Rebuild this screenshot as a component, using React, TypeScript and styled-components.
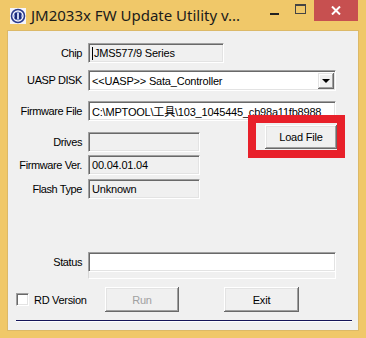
import React from "react";
import styled, { createGlobalStyle } from "styled-components";

const GlobalStyle = createGlobalStyle`
  html, body {
    margin: 0;
    padding: 0;
    background: #f0c869;
  }
  body {
    font-family: "Liberation Sans", Arial, sans-serif;
  }
`;

const Window = styled.div`
  width: 366px;
  height: 338px;
  background: #f0c869;
  display: flex;
  flex-direction: column;
  overflow: hidden;
`;

const TitleBar = styled.div`
  height: 31px;
  display: flex;
  align-items: flex-start;
  flex-shrink: 0;
`;

const AppIcon = styled.svg`
  margin: 8px 0 0 10px;
  flex-shrink: 0;
`;

const Title = styled.div`
  margin: 5px 0 0 5px;
  font-family: "Noto Sans", "Open Sans", sans-serif;
  font-size: 15px;
  line-height: 20px;
  color: #1b1b1b;
  white-space: nowrap;
`;

const Caption = styled.div`
  margin-left: auto;
  margin-right: 8px;
  display: flex;
`;

const CaptionBtn = styled.div<{ $w: number; $close?: boolean }>`
  width: ${(p) => p.$w}px;
  height: 21px;
  display: flex;
  align-items: center;
  justify-content: center;
  background: ${(p) => (p.$close ? "#c75050" : "transparent")};
`;

const MinGlyph = styled.div`
  width: 9px;
  height: 2px;
  background: #222;
  margin-top: 6px;
`;

const MaxGlyph = styled.div`
  width: 9px;
  height: 7px;
  border: 1px solid #444;
  border-top-width: 2px;
  margin-top: -4px;
`;

const Client = styled.div`
  flex: 1;
  margin: 0 8px 8px;
  background: #f0f0f0;
  box-shadow: 0 0 0 1px #dcb968;
  display: flex;
  flex-direction: column;
  padding-top: 12px;
  font-size: 11px;
  color: #000;
`;

const Row = styled.div<{ $mt?: number; $top?: boolean }>`
  display: flex;
  align-items: ${(p) => (p.$top ? "flex-start" : "center")};
  gap: 6px;
  margin-top: ${(p) => p.$mt ?? 0}px;
`;

const Label = styled.div<{ $lh?: number }>`
  width: 74px;
  flex-shrink: 0;
  text-align: right;
  white-space: nowrap;
  font-size: 11px;
  letter-spacing: -0.4px;
  line-height: ${(p) => p.$lh ?? 13}px;
`;

const Field = styled.div<{ $w: number; $h?: number; $white?: boolean }>`
  width: ${(p) => p.$w}px;
  height: ${(p) => p.$h ?? 20}px;
  flex-shrink: 0;
  box-sizing: border-box;
  background: ${(p) => (p.$white ? "#fff" : "#f0f0f0")};
  border-top: 1px solid #a0a0a0;
  border-left: 1px solid #a0a0a0;
  border-bottom: 1px solid #fff;
  border-right: 1px solid #fff;
  box-shadow: inset 1px 1px 0 #696969, inset -1px -1px 0 #e3e3e3;
  padding: 0 3px;
  display: flex;
  align-items: center;
  white-space: nowrap;
  overflow: hidden;
  font-family: "Liberation Sans", "Noto Sans CJK SC", sans-serif;
  font-size: 11px;
  letter-spacing: -0.2px;
`;

const Caret = styled.span`
  display: inline-block;
  width: 1px;
  height: 13px;
  background: #000;
  margin-right: 1px;
`;

const DropBtn = styled.div`
  margin-left: auto;
  margin-right: -2px;
  width: 16px;
  height: 16px;
  box-sizing: border-box;
  background: #f0f0f0;
  box-shadow: inset -1px -1px 0 #696969, inset 1px 1px 0 #e3e3e3,
    inset -2px -2px 0 #a0a0a0, inset 2px 2px 0 #fff;
  display: flex;
  align-items: center;
  justify-content: center;
  flex-shrink: 0;
`;

const Arrow = styled.div`
  width: 0;
  height: 0;
  border-left: 4px solid transparent;
  border-right: 4px solid transparent;
  border-top: 4px solid #000;
`;

const Section = styled.div`
  display: flex;
  margin-top: 4px;
`;

const FieldStack = styled.div`
  display: flex;
  flex-direction: column;
  padding-top: 7px;
  flex-shrink: 0;
`;

const Highlight = styled.div`
  position: relative;
  margin-left: 65px;
  height: 24px;
`;

const RedMark = styled.div`
  position: absolute;
  left: -17px;
  top: -10px;
  right: -8px;
  bottom: -9px;
  border: 8px solid #e8202a;
  pointer-events: none;
`;

const Button = styled.button<{ $w: number; $h?: number; $disabled?: boolean; $ml?: number }>`
  width: ${(p) => p.$w}px;
  height: ${(p) => p.$h ?? 25}px;
  margin-left: ${(p) => p.$ml ?? 0}px;
  padding: 0;
  border: none;
  background: #f0f0f0;
  box-shadow: inset -1px -1px 0 #696969, inset 1px 1px 0 #fff,
    inset -2px -2px 0 #a0a0a0, inset 2px 2px 0 #e3e3e3;
  font-family: "Liberation Sans", Arial, sans-serif;
  font-size: 11px;
  letter-spacing: -0.2px;
  color: ${(p) => (p.$disabled ? "#a0a0a0" : "#000")};
  flex-shrink: 0;
`;

const StatusBlock = styled.div`
  display: flex;
  flex-direction: column;
`;

const Track = styled.div`
  width: 248px;
  height: 7px;
  box-sizing: border-box;
  border-left: 1px solid #d8d8d8;
  border-bottom: 1px solid #fff;
  border-right: 1px solid #fff;
`;

const BottomRow = styled.div`
  display: flex;
  align-items: center;
  margin-top: 8px;
  padding-left: 8px;
`;

const CheckGroup = styled.label`
  width: 89px;
  display: flex;
  align-items: center;
  gap: 5px;
  font-size: 11px;
  letter-spacing: -0.3px;
`;

const CheckBox = styled.span`
  width: 13px;
  height: 13px;
  box-sizing: border-box;
  background: #fff;
  border-top: 1px solid #a0a0a0;
  border-left: 1px solid #a0a0a0;
  border-bottom: 1px solid #fff;
  border-right: 1px solid #fff;
  box-shadow: inset 1px 1px 0 #696969, inset -1px -1px 0 #e3e3e3;
`;

const Divider = styled.div`
  margin: 8px 6px 0 8px;
  height: 1px;
  background: #16165a;
  border-bottom: 1px solid #fff;
`;

export default function App() {
  return (
    <>
      <GlobalStyle />
      <Window>
        <TitleBar>
          <AppIcon width="16" height="16" viewBox="0 0 16 16">
            <rect width="16" height="16" fill="#f4f4fa" />
            <circle cx="8" cy="8" r="6.5" fill="none" stroke="#2a3a8c" strokeWidth="1.6" />
            <circle cx="8" cy="8" r="4" fill="#c9d2ee" stroke="#5a6fb8" strokeWidth="1" />
            <rect x="5" y="5" width="2" height="6" fill="#1c2a78" />
            <rect x="9" y="5" width="2" height="6" fill="#1c2a78" />
          </AppIcon>
          <Title>JM2033x FW Update Utility v...</Title>
          <Caption>
            <CaptionBtn $w={26}>
              <MinGlyph />
            </CaptionBtn>
            <CaptionBtn $w={27}>
              <MaxGlyph />
            </CaptionBtn>
            <CaptionBtn $w={44} $close>
              <svg width="10" height="9" viewBox="0 0 10 9">
                <path d="M1 0.5 L9 8.5 M9 0.5 L1 8.5" stroke="#fff" strokeWidth="2" />
              </svg>
            </CaptionBtn>
          </Caption>
        </TitleBar>

        <Client>
          <Row>
            <Label>Chip</Label>
            <Field $w={136}>
              <Caret />
              JMS577/9 Series
            </Field>
          </Row>
          <Row $mt={7}>
            <Label>UASP DISK</Label>
            <Field $w={248} $h={21} $white>
              {"<<UASP>> Sata_Controller"}
              <DropBtn>
                <Arrow />
              </DropBtn>
            </Field>
          </Row>
          <Row $mt={10}>
            <Label>Firmware File</Label>
            <Field $w={248} $white>
              C:\MPTOOL\工具\103_1045445_cb98a11fb8988
            </Field>
          </Row>

          <Section>
            <FieldStack>
              <Row>
                <Label>Drives</Label>
                <Field $w={112} />
              </Row>
              <Row $mt={3}>
                <Label>Firmware Ver.</Label>
                <Field $w={112}>00.04.01.04</Field>
              </Row>
              <Row $mt={4}>
                <Label>Flash Type</Label>
                <Field $w={112}>Unknown</Field>
              </Row>
            </FieldStack>
            <Highlight>
              <Button $w={72} $h={24}>Load File</Button>
              <RedMark />
            </Highlight>
          </Section>

          <Row $mt={53} $top>
            <Label $lh={20}>Status</Label>
            <StatusBlock>
              <Field $w={248} $white />
              <Track />
            </StatusBlock>
          </Row>

          <BottomRow>
            <CheckGroup>
              <CheckBox />
              RD Version
            </CheckGroup>
            <Button $w={74} $disabled>
              Run
            </Button>
            <Button $w={75} $ml={45}>
              Exit
            </Button>
          </BottomRow>

          <Divider />
        </Client>
      </Window>
    </>
  );
}
